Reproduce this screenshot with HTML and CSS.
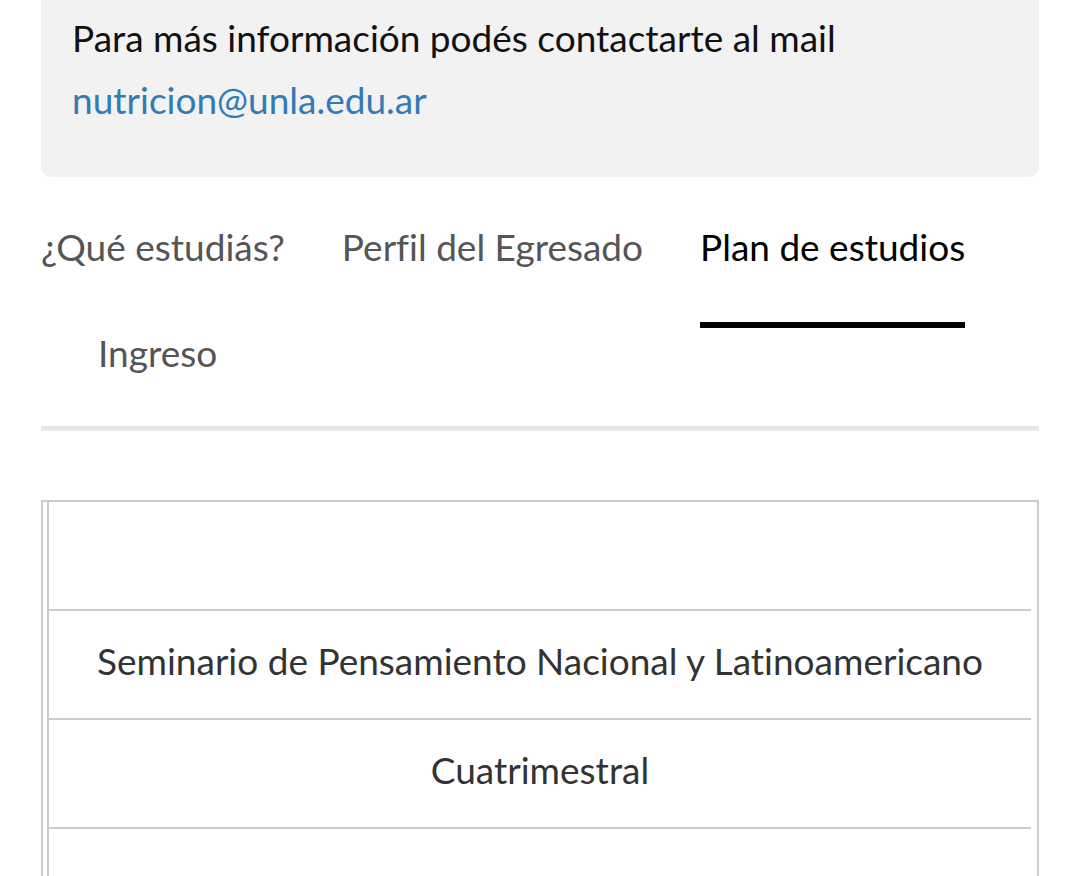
FILE: index.html
```html
<!DOCTYPE html>
<html lang="es">
<head>
    <meta charset="UTF-8">
    <meta name="viewport" content="width=device-width, initial-scale=1.0">
    <title>Licenciatura en Nutrición</title>
    <link rel="stylesheet" href="styles.css">
</head>
<body>
    <div class="page">
        <div class="info-box">
            <p>Para más información podés contactarte al mail <a href="#">nutricion@unla.edu.ar</a></p>
        </div>

        <ul class="tabs">
            <li><a href="#">¿Qué estudiás?</a></li>
            <li><a href="#">Perfil del Egresado</a></li>
            <li class="active"><a href="#">Plan de estudios</a></li>
            <li><a href="#">Ingreso</a></li>
        </ul>

        <div class="plan">
            <table>
                <tbody>
                    <tr><td></td></tr>
                    <tr><td>Seminario de Pensamiento Nacional y Latinoamericano</td></tr>
                    <tr><td>Cuatrimestral</td></tr>
                    <tr><td></td></tr>
                </tbody>
            </table>
        </div>
    </div>
</body>
</html>
```

FILE: styles.css
```css
body {
    margin: 0;
    padding: 0;
    background-color: #fff;
    font-family: Lato, "Liberation Sans", sans-serif;
    font-size: 37px;
    font-variant-ligatures: none;
    color: #111;
}
.page {
    padding: 0 41px;
}
.info-box {
    background-color: #f2f2f2;
    border-radius: 0 0 10px 10px;
    padding: 7px 31px 46px;
}
.info-box p {
    margin: 0;
    line-height: 62px;
}
.info-box a {
    color: #337ab7;
    text-decoration: none;
}
.tabs {
    list-style: none;
    margin: 45px 0 0;
    padding: 0;
    display: flex;
    flex-wrap: wrap;
    row-gap: 8px;
    border-bottom: 5px solid #e6e6e6;
}
.tabs li {
    margin-bottom: -8px;
}
.tabs li + li {
    margin-left: 57px;
}
.tabs a {
    display: block;
    line-height: 50px;
    padding-bottom: 50px;
    border-bottom: 6px solid transparent;
    color: #555;
    text-decoration: none;
}
.tabs .active a {
    color: #000;
    border-bottom-color: #000;
}
.plan {
    margin-top: 69px;
    border: 2px solid #ccc;
    border-bottom: 0;
    padding: 0 6px 0 4px;
}
.plan table {
    width: 100%;
    border-collapse: collapse;
    border-left: 2px solid #ccc;
}
.plan td {
    height: 99px;
    padding: 0 0 8px;
    text-align: center;
    color: #333;
    border-bottom: 2px solid #ccc;
}
```
